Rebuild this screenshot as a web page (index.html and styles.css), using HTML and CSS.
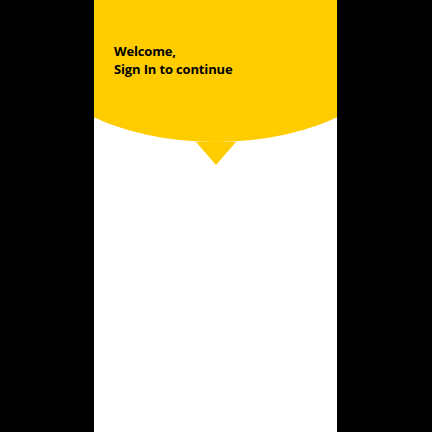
FILE: index.html
```html
<!DOCTYPE html>
<html lang="en">
<head>
<meta charset="utf-8">
<title>Sign In</title>
<link rel="stylesheet" href="styles.css">
</head>
<body>
  <main class="screen">
    <header class="hero">
      <h1 class="hero-title">Welcome,<br>Sign In to continue</h1>
    </header>
    <div class="pointer"></div>
  </main>
</body>
</html>
```

FILE: styles.css
```css
html, body {
  margin: 0;
  padding: 0;
  height: 100%;
  background: #000;
}

body {
  display: flex;
  padding-left: 94px;
  box-sizing: border-box;
}

.screen {
  width: 243px;
  height: 432px;
  background: #fff;
  overflow: hidden;
  display: flex;
  flex-direction: column;
}

.hero {
  flex: none;
  width: 150%;
  height: 196px;
  margin: -54px 0 0 -25%;
  padding: 97px 0 0 calc(25% + 20px);
  box-sizing: border-box;
  background: #ffcc00;
  border-radius: 50%;
}

.hero-title {
  margin: 0;
  font-family: "Open Sans", Lato, sans-serif;
  font-weight: 700;
  font-size: 13px;
  line-height: 17.5px;
  letter-spacing: -0.15px;
  color: #000;
}

.pointer {
  flex: none;
  width: 0;
  height: 0;
  align-self: center;
  border-left: 20px solid transparent;
  border-right: 20px solid transparent;
  border-top: 23px solid #ffcc00;
}
```
